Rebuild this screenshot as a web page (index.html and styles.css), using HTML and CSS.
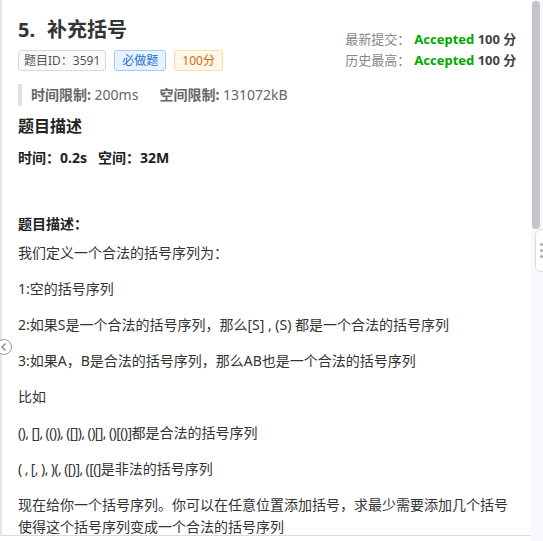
FILE: index.html
```html
<!DOCTYPE html>
<html>
<head>
    <title>5. 补充括号</title>
    <link rel="stylesheet" href="styles.css">
</head>
<body>
    <div class="page">
        <div class="panel">
            <div class="header">
                <div class="title-block">
                    <h1 class="title"><span class="num">5.</span>补充括号</h1>
                    <div class="tags">
                        <span class="tag tag-id">题目ID：3591</span>
                        <span class="tag tag-must">必做题</span>
                        <span class="tag tag-score">100分</span>
                    </div>
                </div>
                <div class="stats">
                    <div class="stat"><span class="label">最新提交：</span><span class="ok">Accepted</span> 100 分</div>
                    <div class="stat"><span class="label">历史最高：</span><span class="ok">Accepted</span> 100 分</div>
                </div>
            </div>

            <div class="limits">
                <span><b>时间限制:</b> 200ms</span>
                <span><b>空间限制:</b> 131072kB</span>
            </div>

            <h3 class="section">题目描述</h3>
            <p class="bold-line">时间：0.2s&nbsp;&nbsp;&nbsp;空间：32M</p>
            <p class="bold-line sub">题目描述：</p>

            <div class="desc">
                <p>我们定义一个合法的括号序列为：</p>
                <p>1:空的括号序列</p>
                <p>2:如果S是一个合法的括号序列，那么[S] , (S) 都是一个合法的括号序列</p>
                <p>3:如果A，B是合法的括号序列，那么AB也是一个合法的括号序列</p>
                <p>比如</p>
                <p><span class="br">(), [], (()), ([]), ()[], ()[()]</span>都是合法的括号序列</p>
                <p><span class="br">( , [, ), )(, ([)], ([(]</span>是非法的括号序列</p>
                <p>现在给你一个括号序列。你可以在任意位置添加括号，求最少需要添加几个括号<br>使得这个括号序列变成一个合法的括号序列</p>
            </div>
        </div>
        <div class="scrollbar">
            <div class="thumb"></div>
        </div>
        <div class="handle"><i></i><i></i><i></i></div>
        <div class="back">
            <svg width="12" height="12" viewBox="0 0 12 12"><path d="M7.5 2.5 L4 6 L7.5 9.5" fill="none" stroke="#888" stroke-width="1.4"/></svg>
        </div>
    </div>
</body>
</html>
```

FILE: styles.css
```css
body {
    margin: 0;
    font-family: "Noto Sans", "Noto Sans CJK SC", sans-serif;
    color: #333;
    background-color: #ffffff;
}
.page {
    position: relative;
    display: flex;
    height: 541px;
    overflow: hidden;
}
.panel {
    width: 513px;
    height: 535px;
    padding: 0 15px 0 16px;
    border-left: 2px solid #e6e6e6;
    border-bottom: 1px solid #dcdcdc;
    overflow: hidden;
}
.header {
    display: flex;
    justify-content: space-between;
}
.title {
    margin: 16px 0 6px;
    font-size: 20px;
    line-height: 28px;
    color: #333;
}
.title .num {
    margin-right: 12px;
}
.tags {
    display: flex;
    gap: 8px;
}
.tag {
    font-size: 12px;
    line-height: 19px;
    padding: 0 5px;
    border: 1px solid;
    border-radius: 3px;
}
.tag-id {
    color: #555;
    background-color: #fafafa;
    border-color: #d9d9d9;
}
.tag-must {
    color: #1f6fd6;
    background-color: #e8f3ff;
    border-color: #9fcbff;
    padding: 0 7px;
}
.tag-score {
    color: #d9670f;
    background-color: #fff7e8;
    border-color: #ffdca8;
    padding: 0 7px;
}
.stats {
    margin-top: 29px;
    text-align: right;
}
.stat {
    font-size: 13px;
    line-height: 21px;
    font-weight: bold;
    color: #444;
}
.stat .label {
    font-weight: normal;
    font-size: 13px;
    color: #888;
    margin-right: 4px;
}
.stat .ok {
    color: #00a800;
}
.limits {
    margin-top: 13px;
    border-left: 4px solid #e2e2e2;
    padding-left: 9px;
    font-size: 14px;
    line-height: 22px;
    color: #666;
    display: flex;
    gap: 21px;
}
.limits b {
    color: #666;
}
.section {
    margin: 8px 0 0;
    font-size: 16px;
    line-height: 24px;
    color: #222;
}
.bold-line {
    margin: 9px 0 0;
    font-size: 14px;
    line-height: 22px;
    font-weight: bold;
    color: #222;
}
.bold-line.sub {
    margin-top: 44px;
}
.desc {
    font-size: 14px;
    line-height: 22px;
    color: #333;
}
.desc p {
    margin: 14px 0 0;
}
.desc p:first-child {
    margin-top: 7px;
}
.br {
    letter-spacing: -0.6px;
}
.scrollbar {
    width: 12px;
    background-color: #f6f8fb;
}
.thumb {
    width: 8px;
    height: 228px;
    margin: 1px 0 0 1px;
    background-color: #c3c3c8;
    border-radius: 4px;
}
.handle {
    position: absolute;
    left: 535px;
    top: 229px;
    width: 10px;
    height: 43px;
    background-color: #fff;
    border: 1px solid #dcdcdc;
    border-radius: 6px 0 0 6px;
    display: flex;
    flex-direction: column;
    justify-content: center;
    gap: 3px;
    padding-left: 4px;
    box-sizing: border-box;
}
.handle i {
    width: 3px;
    height: 3px;
    border-radius: 50%;
    background-color: #aaa;
}
.back {
    position: absolute;
    left: -4px;
    top: 339px;
    width: 14px;
    height: 14px;
    border: 1px solid #999;
    border-radius: 50%;
    background-color: #fff;
    display: flex;
    align-items: center;
    justify-content: center;
}
```
